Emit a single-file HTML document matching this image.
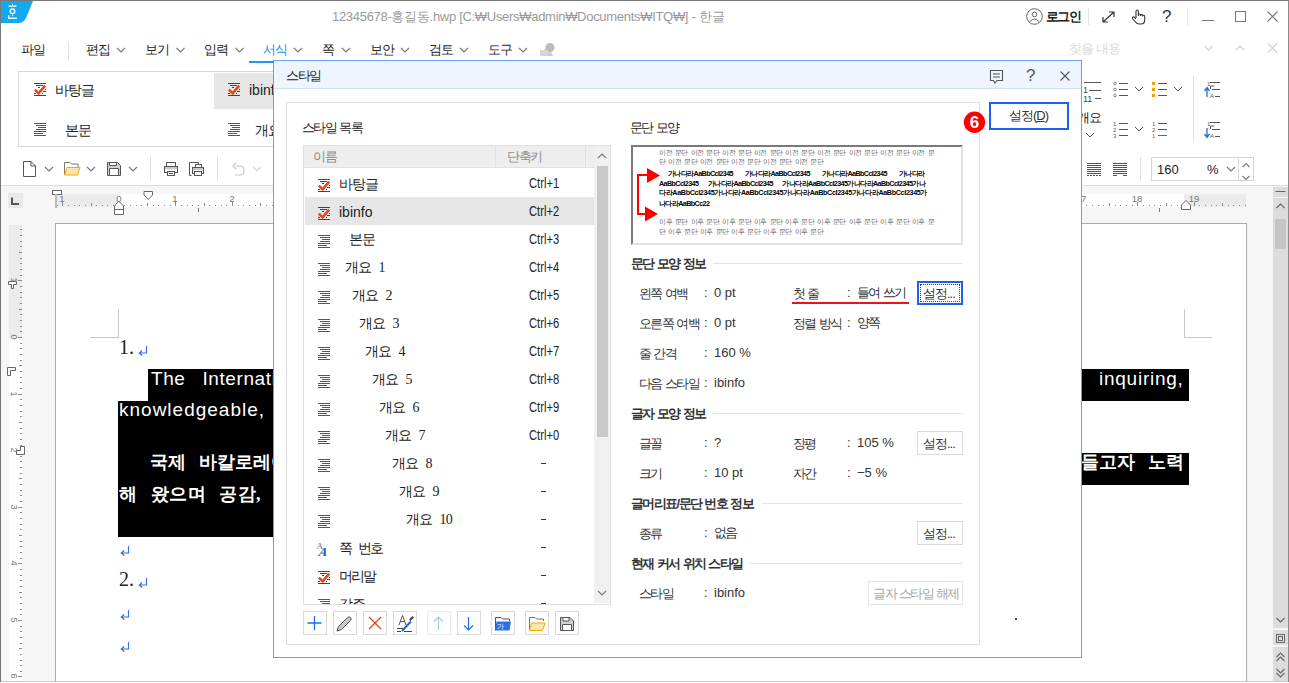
<!DOCTYPE html>
<html><head><meta charset="utf-8">
<style>
*{box-sizing:border-box}
html,body{margin:0;padding:0;width:1289px;height:683px;overflow:hidden;background:#fff;font-family:"Liberation Sans",sans-serif;color:#222}
.a{position:absolute}
.t{position:absolute;white-space:nowrap;line-height:1}
svg{position:absolute;overflow:visible}
</style></head><body>
<!-- window frame -->
<div class="a" style="left:0;top:0;width:1289px;height:683px;border-left:1px solid #777;border-top:1px solid #777;border-right:1px solid #8a8a8a"></div>

<!-- logo -->
<svg style="left:0;top:0" width="40" height="30"><path d="M1 1 H33 L26.5 17 Q24 23 18 23 H1 Z" fill="#12a9f3"/>
<g fill="#fff"><rect x="8.5" y="5.5" width="8" height="1.3"/><rect x="12" y="4" width="1" height="1.6"/><rect x="12" y="14.5" width="1" height="1.6"/><rect x="8" y="15.2" width="1.4" height="3.6"/><rect x="8" y="17.6" width="9" height="1.3"/></g>
<circle cx="12.5" cy="11.3" r="2.3" fill="none" stroke="#fff" stroke-width="1.3"/></svg>
<!-- title -->
<div class="t" style="left:332px;top:10px;font-size:13px;color:#9a9a9a;letter-spacing:-0.3px">12345678-홍길동.hwp [C:₩Users₩admin₩Documents₩ITQ₩] - 한글</div>

<!-- solution scaffold -->

<!-- title right -->
<svg style="left:1026px;top:8px" width="17" height="17"><circle cx="8.5" cy="8.5" r="7.8" fill="none" stroke="#666" stroke-width="1"/><circle cx="8.5" cy="6.5" r="2.3" fill="none" stroke="#666" stroke-width="1"/><path d="M4 13.5 Q8.5 8.5 13 13.5" fill="none" stroke="#666" stroke-width="1"/></svg>
<div class="t" style="left:1046px;top:10px;font-size:13px;font-weight:bold;color:#222;letter-spacing:-1.6px;word-spacing:1px">로그인</div>
<div class="a" style="left:1088px;top:8px;width:1px;height:17px;background:#e2e2e2"></div>
<svg style="left:1102px;top:11px" width="13" height="12"><path d="M1 11 L12 1 M7 1 H12 V6 M1 6 V11 H6" fill="none" stroke="#333" stroke-width="1.2"/></svg>
<svg style="left:1131px;top:9px" width="15" height="16"><path d="M5 9 V2.5 Q5 1 6.2 1 Q7.4 1 7.4 2.5 V7 M7.4 6 Q7.4 5 8.5 5 Q9.6 5 9.6 6 V7 M9.6 6.5 Q9.6 5.6 10.6 5.6 Q11.7 5.6 11.7 6.6 V7.4 M11.7 7 Q11.7 6.3 12.7 6.3 Q13.7 6.3 13.7 7.4 V11 Q13.7 15 10 15 H8 Q6 15 4.5 13 L1.5 9.5 Q1 8.5 2 8 Q3 7.6 3.8 8.6 L5 10" fill="none" stroke="#333" stroke-width="1.1"/></svg>
<div class="t" style="left:1162px;top:8px;font-size:17px;color:#333">?</div>
<div class="a" style="left:1187px;top:8px;width:1px;height:17px;background:#e2e2e2"></div>
<div class="a" style="left:1202px;top:20px;width:12px;height:1px;background:#777"></div>
<div class="a" style="left:1235px;top:11px;width:11px;height:11px;border:1px solid #777"></div>
<svg style="left:1267px;top:11px" width="11" height="11"><path d="M0.5 0.5 L10.5 10.5 M10.5 0.5 L0.5 10.5" stroke="#777" stroke-width="1.1"/></svg>

<!-- menu -->
<div class="t" style="left:21px;top:43px;font-size:13px;color:#222;letter-spacing:-1.5px">파일</div>
<div class="a" style="left:68px;top:42px;width:1px;height:18px;background:#e0e0e0"></div>
<div class="t" style="left:86px;top:43px;font-size:13px;color:#222;letter-spacing:-1.5px">편집</div>
<div class="t" style="left:145px;top:43px;font-size:13px;color:#222;letter-spacing:-1.5px">보기</div>
<div class="t" style="left:204px;top:43px;font-size:13px;color:#222;letter-spacing:-1.5px">입력</div>
<div class="t" style="left:263px;top:43px;font-size:13px;color:#1a8cf0;letter-spacing:-1.5px">서식</div>
<div class="t" style="left:322px;top:43px;font-size:13px;color:#222">쪽</div>
<div class="t" style="left:370px;top:43px;font-size:13px;color:#222;letter-spacing:-1.5px">보안</div>
<div class="t" style="left:429px;top:43px;font-size:13px;color:#222;letter-spacing:-1.5px">검토</div>
<div class="t" style="left:488px;top:43px;font-size:13px;color:#222;letter-spacing:-1.5px">도구</div>
<svg style="left:0;top:0" width="600" height="70">
<path d="M117 48 L121 52 L125 48 M176.5 48 L180.5 52 L184.5 48 M235.5 48 L239.5 52 L243.5 48 M294 48 L298 52 L302 48 M342 48 L346 52 L350 48 M401 48 L405 52 L409 48 M460 48 L464 52 L468 48 M519 48 L523 52 L527 48" fill="none" stroke="#777" stroke-width="1.1"/>
<path d="M541 56 L547 45 L553 56 Z" fill="#ccc"/><circle cx="550" cy="47.5" r="4.5" fill="#bbb"/><path d="M540 50 H548 V56 H540Z" fill="#d5d5d5"/>
</svg>
<div class="a" style="left:249px;top:61px;width:70px;height:2px;background:#1a9af0"></div>
<div class="t" style="left:1069px;top:42px;font-size:13px;color:#dadada;letter-spacing:-1.5px;word-spacing:2px">찾을 내용</div>
<svg style="left:1200px;top:40px" width="85" height="20"><path d="M4.5 6 L8.5 10 L12.5 6 M36 10 L40 6 L44 10" fill="none" stroke="#cfcfcf" stroke-width="1.1"/><path d="M68 3.5 L77 12.5 M77 3.5 L68 12.5" stroke="#cfcfcf" stroke-width="1.1"/></svg>

<!-- ribbon style box -->
<div class="a" style="left:18px;top:71px;width:300px;height:76px;border:1px solid #d8d8d8;border-right:none"></div>
<div class="a" style="left:214px;top:73px;width:80px;height:36px;background:#e6e6e6"></div>
<div class="t" style="left:55px;top:83px;font-size:14px;color:#222;letter-spacing:-1px">바탕글</div>
<div class="t" style="left:249px;top:83px;font-size:14px;color:#222">ibinfo</div>
<div class="t" style="left:65px;top:123px;font-size:14px;color:#222;letter-spacing:-1px">본문</div>
<div class="t" style="left:255px;top:123px;font-size:14px;color:#222;letter-spacing:-1px">개요 1</div>
<svg style="left:34px;top:83px" width="13" height="13"><g fill="#444"><rect x="0" y="0" width="12" height="1"/><rect x="2" y="2" width="7" height="1"/><rect x="4" y="4" width="2" height="1"/><rect x="11" y="6" width="1" height="1"/><rect x="9" y="8" width="3" height="1"/><rect x="0" y="10" width="2" height="1"/><rect x="8" y="10" width="1" height="1"/><rect x="0" y="12" width="12" height="1"/></g><path d="M0.9 6.6 L4.6 10.3 L11.2 2.6" fill="none" stroke="#e5481c" stroke-width="2.6"/></svg>
<svg style="left:228px;top:83px" width="13" height="13"><g fill="#444"><rect x="0" y="0" width="12" height="1"/><rect x="2" y="2" width="7" height="1"/><rect x="4" y="4" width="2" height="1"/><rect x="11" y="6" width="1" height="1"/><rect x="9" y="8" width="3" height="1"/><rect x="0" y="10" width="2" height="1"/><rect x="8" y="10" width="1" height="1"/><rect x="0" y="12" width="12" height="1"/></g><path d="M0.9 6.6 L4.6 10.3 L11.2 2.6" fill="none" stroke="#e5481c" stroke-width="2.6"/></svg>
<svg style="left:34px;top:123px" width="13" height="13"><g fill="#555"><rect x="0" y="0" width="12" height="1"/><rect x="2" y="2" width="10" height="1"/><rect x="4" y="4" width="8" height="1"/><rect x="2" y="6" width="10" height="1"/><rect x="0" y="8" width="12" height="1"/><rect x="0" y="10" width="9" height="1"/><rect x="0" y="12" width="12" height="1"/></g></svg>
<svg style="left:228px;top:123px" width="13" height="13"><g fill="#555"><rect x="0" y="0" width="12" height="1"/><rect x="2" y="2" width="10" height="1"/><rect x="4" y="4" width="8" height="1"/><rect x="2" y="6" width="10" height="1"/><rect x="0" y="8" width="12" height="1"/><rect x="0" y="10" width="9" height="1"/><rect x="0" y="12" width="12" height="1"/></g></svg>

<!-- toolbar -->
<svg style="left:0;top:150px" width="300" height="36">
<path d="M23.5 11.5 H31 L35.5 16 V26.5 H23.5 Z M31 11.5 V16 H35.5" fill="none" stroke="#555" stroke-width="1"/>
<path d="M45 17 L49 21 L53 17 M87 17 L91 21 L95 17 M129 17 L133 21 L137 17" fill="none" stroke="#777" stroke-width="1.1"/>
<path d="M64.5 24.5 V12.5 H70 L71.5 14 H78 V17" fill="none" stroke="#777" stroke-width="1"/>
<path d="M64.5 25 L67 17.5 H80 L77.5 25 Z" fill="#fde3b0" stroke="#efac00" stroke-width="1"/>
<path d="M107.5 12.5 H117.5 L120.5 15.5 V25.5 H107.5 Z" fill="#d0d0d0" stroke="#555" stroke-width="1"/>
<path d="M109.5 12.5 H116.5 V15.5 H109.5 Z" fill="#fff" stroke="#555" stroke-width="1"/>
<path d="M109.5 18.5 H118.5 V25.5 H109.5 Z" fill="#fff" stroke="#555" stroke-width="1"/>
<rect x="164.5" y="16.5" width="13" height="6" fill="#fff" stroke="#555"/><rect x="165" y="17" width="12" height="2.5" fill="#c9c9c9"/>
<rect x="166.5" y="12.5" width="9" height="4" fill="#fff" stroke="#555"/>
<rect x="167.5" y="21.5" width="7" height="4" fill="#fff" stroke="#555"/><path d="M169 23.5 H173" stroke="#555"/>
<path d="M191.5 25.5 H189.5 V12.5 H198.5 V14" fill="none" stroke="#555"/>
<rect x="192.5" y="17.5" width="11" height="6" fill="#fff" stroke="#555"/><rect x="193" y="18" width="10" height="2" fill="#c9c9c9"/>
<rect x="195.5" y="14.5" width="6" height="3" fill="#fff" stroke="#555"/>
<rect x="194.5" y="21.5" width="7" height="4" fill="#fff" stroke="#555"/>
<path d="M236 16 H240 Q244 16 244 20.5 Q244 25 240 25 H235 M236 13 L233 16 L236 19" fill="none" stroke="#c6c6c6" stroke-width="1.1"/>
<path d="M253 17 L257 21 L261 17" fill="none" stroke="#d0d0d0" stroke-width="1.1"/>
</svg>
<div class="a" style="left:150px;top:157px;width:1px;height:24px;background:#dedede"></div>
<div class="a" style="left:217px;top:157px;width:1px;height:24px;background:#dedede"></div>


<!-- lower bg -->
<div class="a" style="left:1px;top:185px;width:1287px;height:1px;background:#dcdcdc"></div>
<div class="a" style="left:1px;top:186px;width:1287px;height:495px;background:#f6f6f6"></div>



<!-- ruler -->
<div class="a" style="left:8px;top:193px;width:15px;height:15px;background:#e9e9e9"></div>
<svg style="left:8px;top:193px" width="15" height="15"><path d="M4 4.5 V11 H11" fill="none" stroke="#555" stroke-width="2"/></svg>
<div class="a" style="left:55px;top:194px;width:63px;height:13px;background:#ebebeb"></div>
<div class="a" style="left:118px;top:194px;width:1066px;height:13px;background:#fff"></div>
<div class="a" style="left:1184px;top:194px;width:62px;height:13px;background:#ebebeb"></div>
<svg style="left:0;top:0" width="1289" height="230"><g fill="#8a8a8a"><rect x="57" y="205" width="1" height="1"/><rect x="62" y="202" width="1" height="4"/><rect x="68" y="205" width="1" height="1"/><rect x="74" y="205" width="1" height="1"/><rect x="79" y="205" width="1" height="1"/><rect x="85" y="205" width="1" height="1"/><rect x="91" y="203" width="1" height="3"/><rect x="96" y="205" width="1" height="1"/><rect x="102" y="205" width="1" height="1"/><rect x="107" y="205" width="1" height="1"/><rect x="113" y="205" width="1" height="1"/><rect x="119" y="202" width="1" height="4"/><rect x="124" y="205" width="1" height="1"/><rect x="130" y="205" width="1" height="1"/><rect x="136" y="205" width="1" height="1"/><rect x="141" y="205" width="1" height="1"/><rect x="147" y="203" width="1" height="3"/><rect x="153" y="205" width="1" height="1"/><rect x="158" y="205" width="1" height="1"/><rect x="164" y="205" width="1" height="1"/><rect x="170" y="205" width="1" height="1"/><rect x="175" y="202" width="1" height="4"/><rect x="181" y="205" width="1" height="1"/><rect x="187" y="205" width="1" height="1"/><rect x="192" y="205" width="1" height="1"/><rect x="198" y="205" width="1" height="1"/><rect x="204" y="203" width="1" height="3"/><rect x="209" y="205" width="1" height="1"/><rect x="215" y="205" width="1" height="1"/><rect x="221" y="205" width="1" height="1"/><rect x="226" y="205" width="1" height="1"/><rect x="232" y="202" width="1" height="4"/><rect x="238" y="205" width="1" height="1"/><rect x="243" y="205" width="1" height="1"/><rect x="249" y="205" width="1" height="1"/><rect x="255" y="205" width="1" height="1"/><rect x="260" y="203" width="1" height="3"/><rect x="266" y="205" width="1" height="1"/><rect x="272" y="205" width="1" height="1"/><rect x="277" y="205" width="1" height="1"/><rect x="283" y="205" width="1" height="1"/><rect x="289" y="202" width="1" height="4"/><rect x="294" y="205" width="1" height="1"/><rect x="300" y="205" width="1" height="1"/><rect x="306" y="205" width="1" height="1"/><rect x="311" y="205" width="1" height="1"/><rect x="317" y="203" width="1" height="3"/><rect x="322" y="205" width="1" height="1"/><rect x="328" y="205" width="1" height="1"/><rect x="334" y="205" width="1" height="1"/><rect x="339" y="205" width="1" height="1"/><rect x="345" y="202" width="1" height="4"/><rect x="351" y="205" width="1" height="1"/><rect x="356" y="205" width="1" height="1"/><rect x="362" y="205" width="1" height="1"/><rect x="368" y="205" width="1" height="1"/><rect x="373" y="203" width="1" height="3"/><rect x="379" y="205" width="1" height="1"/><rect x="385" y="205" width="1" height="1"/><rect x="390" y="205" width="1" height="1"/><rect x="396" y="205" width="1" height="1"/><rect x="402" y="202" width="1" height="4"/><rect x="407" y="205" width="1" height="1"/><rect x="413" y="205" width="1" height="1"/><rect x="419" y="205" width="1" height="1"/><rect x="424" y="205" width="1" height="1"/><rect x="430" y="203" width="1" height="3"/><rect x="436" y="205" width="1" height="1"/><rect x="441" y="205" width="1" height="1"/><rect x="447" y="205" width="1" height="1"/><rect x="453" y="205" width="1" height="1"/><rect x="458" y="202" width="1" height="4"/><rect x="464" y="205" width="1" height="1"/><rect x="470" y="205" width="1" height="1"/><rect x="475" y="205" width="1" height="1"/><rect x="481" y="205" width="1" height="1"/><rect x="487" y="203" width="1" height="3"/><rect x="492" y="205" width="1" height="1"/><rect x="498" y="205" width="1" height="1"/><rect x="504" y="205" width="1" height="1"/><rect x="509" y="205" width="1" height="1"/><rect x="515" y="202" width="1" height="4"/><rect x="521" y="205" width="1" height="1"/><rect x="526" y="205" width="1" height="1"/><rect x="532" y="205" width="1" height="1"/><rect x="537" y="205" width="1" height="1"/><rect x="543" y="203" width="1" height="3"/><rect x="549" y="205" width="1" height="1"/><rect x="554" y="205" width="1" height="1"/><rect x="560" y="205" width="1" height="1"/><rect x="566" y="205" width="1" height="1"/><rect x="571" y="202" width="1" height="4"/><rect x="577" y="205" width="1" height="1"/><rect x="583" y="205" width="1" height="1"/><rect x="588" y="205" width="1" height="1"/><rect x="594" y="205" width="1" height="1"/><rect x="600" y="203" width="1" height="3"/><rect x="605" y="205" width="1" height="1"/><rect x="611" y="205" width="1" height="1"/><rect x="617" y="205" width="1" height="1"/><rect x="622" y="205" width="1" height="1"/><rect x="628" y="202" width="1" height="4"/><rect x="634" y="205" width="1" height="1"/><rect x="639" y="205" width="1" height="1"/><rect x="645" y="205" width="1" height="1"/><rect x="651" y="205" width="1" height="1"/><rect x="656" y="203" width="1" height="3"/><rect x="662" y="205" width="1" height="1"/><rect x="668" y="205" width="1" height="1"/><rect x="673" y="205" width="1" height="1"/><rect x="679" y="205" width="1" height="1"/><rect x="685" y="202" width="1" height="4"/><rect x="690" y="205" width="1" height="1"/><rect x="696" y="205" width="1" height="1"/><rect x="702" y="205" width="1" height="1"/><rect x="707" y="205" width="1" height="1"/><rect x="713" y="203" width="1" height="3"/><rect x="719" y="205" width="1" height="1"/><rect x="724" y="205" width="1" height="1"/><rect x="730" y="205" width="1" height="1"/><rect x="736" y="205" width="1" height="1"/><rect x="741" y="202" width="1" height="4"/><rect x="747" y="205" width="1" height="1"/><rect x="752" y="205" width="1" height="1"/><rect x="758" y="205" width="1" height="1"/><rect x="764" y="205" width="1" height="1"/><rect x="769" y="203" width="1" height="3"/><rect x="775" y="205" width="1" height="1"/><rect x="781" y="205" width="1" height="1"/><rect x="786" y="205" width="1" height="1"/><rect x="792" y="205" width="1" height="1"/><rect x="798" y="202" width="1" height="4"/><rect x="803" y="205" width="1" height="1"/><rect x="809" y="205" width="1" height="1"/><rect x="815" y="205" width="1" height="1"/><rect x="820" y="205" width="1" height="1"/><rect x="826" y="203" width="1" height="3"/><rect x="832" y="205" width="1" height="1"/><rect x="837" y="205" width="1" height="1"/><rect x="843" y="205" width="1" height="1"/><rect x="849" y="205" width="1" height="1"/><rect x="854" y="202" width="1" height="4"/><rect x="860" y="205" width="1" height="1"/><rect x="866" y="205" width="1" height="1"/><rect x="871" y="205" width="1" height="1"/><rect x="877" y="205" width="1" height="1"/><rect x="883" y="203" width="1" height="3"/><rect x="888" y="205" width="1" height="1"/><rect x="894" y="205" width="1" height="1"/><rect x="900" y="205" width="1" height="1"/><rect x="905" y="205" width="1" height="1"/><rect x="911" y="202" width="1" height="4"/><rect x="917" y="205" width="1" height="1"/><rect x="922" y="205" width="1" height="1"/><rect x="928" y="205" width="1" height="1"/><rect x="934" y="205" width="1" height="1"/><rect x="939" y="203" width="1" height="3"/><rect x="945" y="205" width="1" height="1"/><rect x="951" y="205" width="1" height="1"/><rect x="956" y="205" width="1" height="1"/><rect x="962" y="205" width="1" height="1"/><rect x="968" y="202" width="1" height="4"/><rect x="973" y="205" width="1" height="1"/><rect x="979" y="205" width="1" height="1"/><rect x="984" y="205" width="1" height="1"/><rect x="990" y="205" width="1" height="1"/><rect x="996" y="203" width="1" height="3"/><rect x="1001" y="205" width="1" height="1"/><rect x="1007" y="205" width="1" height="1"/><rect x="1013" y="205" width="1" height="1"/><rect x="1018" y="205" width="1" height="1"/><rect x="1024" y="202" width="1" height="4"/><rect x="1030" y="205" width="1" height="1"/><rect x="1035" y="205" width="1" height="1"/><rect x="1041" y="205" width="1" height="1"/><rect x="1047" y="205" width="1" height="1"/><rect x="1052" y="203" width="1" height="3"/><rect x="1058" y="205" width="1" height="1"/><rect x="1064" y="205" width="1" height="1"/><rect x="1069" y="205" width="1" height="1"/><rect x="1075" y="205" width="1" height="1"/><rect x="1081" y="202" width="1" height="4"/><rect x="1086" y="205" width="1" height="1"/><rect x="1092" y="205" width="1" height="1"/><rect x="1098" y="205" width="1" height="1"/><rect x="1103" y="205" width="1" height="1"/><rect x="1109" y="203" width="1" height="3"/><rect x="1115" y="205" width="1" height="1"/><rect x="1120" y="205" width="1" height="1"/><rect x="1126" y="205" width="1" height="1"/><rect x="1132" y="205" width="1" height="1"/><rect x="1137" y="202" width="1" height="4"/><rect x="1143" y="205" width="1" height="1"/><rect x="1149" y="205" width="1" height="1"/><rect x="1154" y="205" width="1" height="1"/><rect x="1160" y="205" width="1" height="1"/><rect x="1166" y="203" width="1" height="3"/><rect x="1171" y="205" width="1" height="1"/><rect x="1177" y="205" width="1" height="1"/><rect x="1183" y="205" width="1" height="1"/><rect x="1188" y="205" width="1" height="1"/><rect x="1194" y="202" width="1" height="4"/><rect x="1199" y="205" width="1" height="1"/><rect x="1205" y="205" width="1" height="1"/><rect x="1211" y="205" width="1" height="1"/><rect x="1216" y="205" width="1" height="1"/><rect x="1222" y="203" width="1" height="3"/><rect x="1228" y="205" width="1" height="1"/><rect x="1233" y="205" width="1" height="1"/><rect x="1239" y="205" width="1" height="1"/><rect x="1245" y="205" width="1" height="1"/></g><g font-family="Liberation Sans" font-size="9.5" fill="#777"><text x="62" y="202" text-anchor="middle">1</text><text x="119" y="202" text-anchor="middle">0</text><text x="175" y="202" text-anchor="middle">1</text><text x="232" y="202" text-anchor="middle">2</text><text x="289" y="202" text-anchor="middle">3</text><text x="345" y="202" text-anchor="middle">4</text><text x="402" y="202" text-anchor="middle">5</text><text x="458" y="202" text-anchor="middle">6</text><text x="515" y="202" text-anchor="middle">7</text><text x="571" y="202" text-anchor="middle">8</text><text x="628" y="202" text-anchor="middle">9</text><text x="685" y="202" text-anchor="middle">10</text><text x="741" y="202" text-anchor="middle">11</text><text x="798" y="202" text-anchor="middle">12</text><text x="854" y="202" text-anchor="middle">13</text><text x="911" y="202" text-anchor="middle">14</text><text x="968" y="202" text-anchor="middle">15</text><text x="1024" y="202" text-anchor="middle">16</text><text x="1081" y="202" text-anchor="middle">17</text><text x="1137" y="202" text-anchor="middle">18</text><text x="1194" y="202" text-anchor="middle">19</text></g><g fill="#fff" stroke="#666" stroke-width="1">
<rect x="52.5" y="190.5" width="9" height="4"/>
<path d="M114.5 214.5 V206 L118.8 201 L123.5 206 V214.5 Z M114.5 209.5 H123.5"/>
<path d="M144 191.5 H152.5 V195 L148.2 199.5 L144 195 Z"/>
<path d="M1181.5 209.5 V205 L1186 200.5 L1190.5 205 V209.5 Z"/>
</g><rect x="55" y="194" width="2" height="14" fill="#bbb"/>
<rect x="198" y="208" width="1" height="4" fill="#777"/><rect x="1159" y="208" width="1" height="4" fill="#777"/>
</svg>
<!-- vertical ruler -->
<div class="a" style="left:9px;top:225px;width:13px;height:113px;background:#ebebeb"></div>
<div class="a" style="left:9px;top:338px;width:13px;height:343px;background:#fff"></div>
<svg style="left:0;top:0" width="30" height="683"><g fill="#8a8a8a"><rect x="20" y="229" width="2" height="1"/><rect x="20" y="235" width="2" height="1"/><rect x="20" y="241" width="2" height="1"/><rect x="20" y="246" width="2" height="1"/><rect x="19" y="252" width="3" height="1"/><rect x="20" y="258" width="2" height="1"/><rect x="20" y="263" width="2" height="1"/><rect x="20" y="269" width="2" height="1"/><rect x="20" y="275" width="2" height="1"/><rect x="18" y="280" width="4" height="1"/><rect x="20" y="286" width="2" height="1"/><rect x="20" y="292" width="2" height="1"/><rect x="20" y="297" width="2" height="1"/><rect x="20" y="303" width="2" height="1"/><rect x="19" y="309" width="3" height="1"/><rect x="20" y="314" width="2" height="1"/><rect x="20" y="320" width="2" height="1"/><rect x="20" y="326" width="2" height="1"/><rect x="20" y="331" width="2" height="1"/><rect x="18" y="337" width="4" height="1"/><rect x="20" y="343" width="2" height="1"/><rect x="20" y="348" width="2" height="1"/><rect x="20" y="354" width="2" height="1"/><rect x="20" y="360" width="2" height="1"/><rect x="19" y="365" width="3" height="1"/><rect x="20" y="371" width="2" height="1"/><rect x="20" y="377" width="2" height="1"/><rect x="20" y="382" width="2" height="1"/><rect x="20" y="388" width="2" height="1"/><rect x="18" y="394" width="4" height="1"/><rect x="20" y="399" width="2" height="1"/><rect x="20" y="405" width="2" height="1"/><rect x="20" y="411" width="2" height="1"/><rect x="20" y="416" width="2" height="1"/><rect x="19" y="422" width="3" height="1"/><rect x="20" y="428" width="2" height="1"/><rect x="20" y="433" width="2" height="1"/><rect x="20" y="439" width="2" height="1"/><rect x="20" y="445" width="2" height="1"/><rect x="18" y="450" width="4" height="1"/><rect x="20" y="456" width="2" height="1"/><rect x="20" y="461" width="2" height="1"/><rect x="20" y="467" width="2" height="1"/><rect x="20" y="473" width="2" height="1"/><rect x="19" y="478" width="3" height="1"/><rect x="20" y="484" width="2" height="1"/><rect x="20" y="490" width="2" height="1"/><rect x="20" y="495" width="2" height="1"/><rect x="20" y="501" width="2" height="1"/><rect x="18" y="507" width="4" height="1"/><rect x="20" y="512" width="2" height="1"/><rect x="20" y="518" width="2" height="1"/><rect x="20" y="524" width="2" height="1"/><rect x="20" y="529" width="2" height="1"/><rect x="19" y="535" width="3" height="1"/><rect x="20" y="541" width="2" height="1"/><rect x="20" y="546" width="2" height="1"/><rect x="20" y="552" width="2" height="1"/><rect x="20" y="558" width="2" height="1"/><rect x="18" y="563" width="4" height="1"/><rect x="20" y="569" width="2" height="1"/><rect x="20" y="575" width="2" height="1"/><rect x="20" y="580" width="2" height="1"/><rect x="20" y="586" width="2" height="1"/><rect x="19" y="592" width="3" height="1"/><rect x="20" y="597" width="2" height="1"/><rect x="20" y="603" width="2" height="1"/><rect x="20" y="609" width="2" height="1"/><rect x="20" y="614" width="2" height="1"/><rect x="18" y="620" width="4" height="1"/><rect x="20" y="626" width="2" height="1"/><rect x="20" y="631" width="2" height="1"/><rect x="20" y="637" width="2" height="1"/><rect x="20" y="643" width="2" height="1"/><rect x="19" y="648" width="3" height="1"/><rect x="20" y="654" width="2" height="1"/><rect x="20" y="660" width="2" height="1"/><rect x="20" y="665" width="2" height="1"/><rect x="20" y="671" width="2" height="1"/><rect x="18" y="676" width="4" height="1"/></g><g font-family="Liberation Sans" font-size="9" fill="#777"><text x="0" y="0" transform="translate(10.5 280) rotate(90)" text-anchor="middle">1</text><text x="0" y="0" transform="translate(10.5 337) rotate(90)" text-anchor="middle">0</text><text x="0" y="0" transform="translate(10.5 394) rotate(90)" text-anchor="middle">1</text><text x="0" y="0" transform="translate(10.5 450) rotate(90)" text-anchor="middle">2</text><text x="0" y="0" transform="translate(10.5 507) rotate(90)" text-anchor="middle">3</text><text x="0" y="0" transform="translate(10.5 563) rotate(90)" text-anchor="middle">4</text><text x="0" y="0" transform="translate(10.5 620) rotate(90)" text-anchor="middle">5</text><text x="0" y="0" transform="translate(10.5 676) rotate(90)" text-anchor="middle">6</text></g><g fill="#fff" stroke="#666" stroke-width="1">
<path d="M8.5 281.5 H16.5 V284.5 H13.5 V288.5 H11.5 V284.5 H8.5 Z"/>
<path d="M7.5 375.5 V367.5 H15.5 V370.5 H10.5 V375.5 Z"/>
<path d="M16.5 454.5 V450.5 H20.5 V446.5 H24.5 V454.5 Z"/>
</g></svg>

<!-- scrollbar -->
<div class="a" style="left:1273px;top:187px;width:15px;height:494px;background:#dcdcdc"></div>
<div class="a" style="left:1273px;top:197px;width:15px;height:1px;background:#f5f5f5"></div>
<div class="a" style="left:1275px;top:219px;width:11px;height:30px;background:#c6c6c6"></div>
<div class="a" style="left:1273px;top:628px;width:15px;height:2px;background:#f5f5f5"></div>
<div class="a" style="left:1273px;top:645px;width:15px;height:2px;background:#f5f5f5"></div>
<svg style="left:1273px;top:187px" width="15" height="494">
<path d="M2.5 4.5 H12.5" stroke="#666" stroke-width="1"/>
<path d="M3.5 21 L7.5 17 L11.5 21" fill="none" stroke="#666" stroke-width="1.1"/>
<path d="M3.5 431 L7.5 435 L11.5 431" fill="none" stroke="#666" stroke-width="1.1"/>
<rect x="3.5" y="447.5" width="8" height="8" fill="none" stroke="#666" stroke-width="1"/><rect x="5.5" y="449.5" width="4" height="4" fill="none" stroke="#666" stroke-width="1"/>
<path d="M3.5 470 L7.5 466 L11.5 470 M3.5 474 L7.5 470 L11.5 474 M3.5 482 L7.5 486 L11.5 482 M3.5 486 L7.5 490 L11.5 486" fill="none" stroke="#666" stroke-width="1.1"/>
</svg>

<!-- right ribbon icons -->
<svg style="left:1075px;top:60px" width="214" height="130">
<g stroke="#555" stroke-width="1" fill="none">
<path d="M9 22.5 H26 M14 30.5 H26 M20 38.5 H26"/>
<path d="M44 23.5 H53 M44 29.5 H53 M44 35.5 H53"/>
<path d="M83 23.5 H92 M83 29.5 H92 M83 35.5 H92"/>
<path d="M44 63.5 H53 M44 69.5 H53 M44 75.5 H53"/>
<path d="M83 63.5 H92 M83 69.5 H92"/>
<path d="M135 22.5 H145 M137 29.5 H145 M140 36.5 H145"/>
<path d="M135 62.5 H145 M137 69.5 H145 M140 76.5 H145"/>
<path d="M135.5 29 V26 H139 M135.5 69 V66 H139"/>
<path d="M60 27 L64 31 L68 27 M99 27 L103 31 L107 27 M60 67 L64 71 L68 67 M11 73 L15 77 L19 73"/>
</g>
<g fill="none" stroke="#777" stroke-width="0.9"><circle cx="40" cy="23.5" r="1.3"/><circle cx="40" cy="29.5" r="1.3"/><circle cx="40" cy="35.5" r="1.3"/></g>
<g fill="#f0a000"><rect x="77" y="22" width="3" height="3"/><rect x="77" y="28" width="3" height="3"/><rect x="77" y="34" width="3" height="3"/></g>
<path d="M83 75.5 H92" stroke="#e5381c" stroke-width="1"/>
<g font-family="Liberation Sans" font-size="6" fill="#555"><text x="38" y="66">1</text><text x="38" y="72">2</text><text x="38" y="78">3</text><text x="77" y="66">1</text><text x="77" y="72">2</text><text x="77" y="78" fill="#e5381c">1</text><text x="132" y="26">1</text><text x="132" y="66">1</text><text x="135" y="38">A</text><text x="135" y="78">A</text></g>
<g font-family="Liberation Sans" font-size="9" fill="#444"><text x="8" y="33">1</text><text x="8" y="42">11</text></g>
<path d="M132 37 V28 M129.5 31 L132 27.5 L134.5 31 M132 68 V77 M129.5 74 L132 77.5 L134.5 74" fill="none" stroke="#1f6fe5" stroke-width="1.3"/>
</svg>
<div class="t" style="left:1077px;top:111px;font-size:13px;color:#222;letter-spacing:-1.5px">개요</div>
<div class="a" style="left:1193px;top:76px;width:1px;height:66px;background:#e0e0e0"></div>
<svg style="left:1080px;top:155px" width="60" height="30">
<path d="M7 8.5 H21 M7 10.5 H21 M7 12.5 H21 M7 14.5 H21 M7 16.5 H21 M7 18.5 H21" stroke="#555" stroke-width="1"/>
<path d="M7 20.5 H21" stroke="#555" stroke-width="1" stroke-dasharray="2 1"/>
<path d="M33 8.5 H47 M33 10.5 H47 M33 12.5 H47 M33 14.5 H47 M33 16.5 H47 M33 18.5 H47" stroke="#555" stroke-width="1"/>
<path d="M33 20.5 H37 M43 20.5 H47" stroke="#555" stroke-width="1"/>
</svg>
<div class="a" style="left:1140px;top:157px;width:1px;height:24px;background:#e0e0e0"></div>
<div class="a" style="left:1151px;top:157px;width:103px;height:24px;border:1px solid #d6d6d6;background:#fff"></div>
<div class="a" style="left:1238px;top:158px;width:1px;height:22px;background:#d6d6d6"></div>
<div class="t" style="left:1157px;top:163px;font-size:13px;color:#222">160</div>
<div class="t" style="left:1207px;top:163px;font-size:13px;color:#222">%</div>
<svg style="left:1220px;top:155px" width="40" height="30"><path d="M7 12 L11 16 L15 12 M22.5 12 L26 8.5 L29.5 12 M22.5 21 L26 24.5 L29.5 21" fill="none" stroke="#777" stroke-width="1.1"/></svg>

<!-- page -->
<div class="a" style="left:55px;top:223px;width:1192px;height:460px;background:#fff;border:1px solid #a9a9a9;border-bottom:none"></div>


<!-- doc content -->
<div class="a" style="left:118px;top:309px;width:1px;height:29px;background:#c8c8c8"></div>
<div class="a" style="left:90px;top:337px;width:28px;height:1px;background:#c8c8c8"></div>
<div class="a" style="left:1184px;top:309px;width:1px;height:29px;background:#c8c8c8"></div>
<div class="a" style="left:1184px;top:337px;width:28px;height:1px;background:#c8c8c8"></div>
<div class="t" style="left:119px;top:337px;font-size:20px;font-family:'Liberation Serif',serif;color:#222">1.</div>
<div class="t" style="left:119px;top:569px;font-size:20px;font-family:'Liberation Serif',serif;color:#222">2.</div>
<svg style="left:138px;top:346px" width="10" height="10"><path d="M8.5 0 V7 H2 M4.2 4.5 L1.3 7 L4.2 9.5" fill="none" stroke="#3b6fe8" stroke-width="1.2"/></svg>
<svg style="left:120px;top:546px" width="10" height="10"><path d="M8.5 0 V7 H2 M4.2 4.5 L1.3 7 L4.2 9.5" fill="none" stroke="#3b6fe8" stroke-width="1.2"/></svg>
<svg style="left:138px;top:578px" width="10" height="10"><path d="M8.5 0 V7 H2 M4.2 4.5 L1.3 7 L4.2 9.5" fill="none" stroke="#3b6fe8" stroke-width="1.2"/></svg>
<svg style="left:120px;top:610px" width="10" height="10"><path d="M8.5 0 V7 H2 M4.2 4.5 L1.3 7 L4.2 9.5" fill="none" stroke="#3b6fe8" stroke-width="1.2"/></svg>
<svg style="left:120px;top:642px" width="10" height="10"><path d="M8.5 0 V7 H2 M4.2 4.5 L1.3 7 L4.2 9.5" fill="none" stroke="#3b6fe8" stroke-width="1.2"/></svg>

<div class="a" style="left:148px;top:369px;width:1041px;height:32px;background:#000"></div>
<div class="a" style="left:118px;top:401px;width:900px;height:52px;background:#000"></div>
<div class="a" style="left:118px;top:453px;width:1071px;height:32px;background:#000"></div>
<div class="a" style="left:118px;top:485px;width:900px;height:52px;background:#000"></div>
<div class="t" style="left:151px;top:369px;font-size:19px;color:#fff;letter-spacing:0.6px;word-spacing:11px">The International</div>
<div class="t" style="left:1099px;top:369px;font-size:19px;color:#fff;letter-spacing:0.75px">inquiring,</div>
<div class="t" style="left:119px;top:400px;font-size:19px;color:#fff;letter-spacing:1px">knowledgeable,</div>
<div class="t" style="left:150px;top:453px;font-size:18px;font-family:'Liberation Serif',serif;font-weight:bold;color:#fff;word-spacing:8px">국제 바칼로레아</div>
<div class="t" style="left:1063px;top:453px;font-size:18px;font-family:'Liberation Serif',serif;font-weight:bold;color:#fff;word-spacing:8px">만들고자 노력</div>
<div class="t" style="left:119px;top:485px;font-size:18px;font-family:'Liberation Serif',serif;font-weight:bold;color:#fff;word-spacing:8px;letter-spacing:0.5px">해 왔으며 공감,</div>

<!-- dialog -->
<div class="a" style="left:273px;top:60px;width:809px;height:598px;background:#fff;border:1px solid #6d9cf5"></div>
<div class="a" style="left:274px;top:61px;width:807px;height:28px;background:#eef5fe;border-bottom:1px solid #cfdff6"></div>
<div class="t" style="left:286px;top:69px;font-size:13px;color:#222;letter-spacing:-1.5px">스타일</div>
<div class="a" style="left:286px;top:102px;width:694px;height:543px;border:1px solid #dedede"></div>

<div class="t" style="left:302px;top:121px;font-size:13px;color:#222;letter-spacing:-1.6px;word-spacing:1px">스타일 목록</div>
<div class="a" style="left:303px;top:145px;width:308px;height:460px;background:#fff;overflow:hidden">
<div class="a" style="left:0;top:0;width:308px;height:23px;background:#eeeeee;border-bottom:1px solid #e2e2e2"></div>
<div class="a" style="left:192px;top:0;width:1px;height:22px;background:#e0e0e0"></div>
<div class="a" style="left:282px;top:0;width:1px;height:22px;background:#e0e0e0"></div>
<div class="t" style="left:10px;top:5px;font-size:13px;color:#8a8a8a;letter-spacing:-1px">이름</div>
<div class="t" style="left:204px;top:5px;font-size:13px;color:#8a8a8a;letter-spacing:-1.5px">단축키</div>
<div class="a" style="left:2px;top:52px;width:289px;height:28px;background:#e6e6e6"></div>
<svg style="left:15px;top:34px" width="13" height="13"><g fill="#444"><rect x="0" y="0" width="12" height="1"/><rect x="2" y="2" width="7" height="1"/><rect x="4" y="4" width="2" height="1"/><rect x="11" y="6" width="1" height="1"/><rect x="9" y="8" width="3" height="1"/><rect x="0" y="10" width="2" height="1"/><rect x="8" y="10" width="1" height="1"/><rect x="0" y="12" width="12" height="1"/></g><path d="M0.9 6.6 L4.6 10.3 L11.2 2.6" fill="none" stroke="#e5481c" stroke-width="2.6"/></svg>
<div class="t" style="left:36px;top:32px;font-size:14px;color:#222;letter-spacing:-1px">바탕글</div>
<div class="t" style="left:226px;top:31px;font-size:14px;color:#222;transform:scaleX(0.8);transform-origin:0 0">Ctrl+1</div>
<svg style="left:15px;top:62px" width="13" height="13"><g fill="#444"><rect x="0" y="0" width="12" height="1"/><rect x="2" y="2" width="7" height="1"/><rect x="4" y="4" width="2" height="1"/><rect x="11" y="6" width="1" height="1"/><rect x="9" y="8" width="3" height="1"/><rect x="0" y="10" width="2" height="1"/><rect x="8" y="10" width="1" height="1"/><rect x="0" y="12" width="12" height="1"/></g><path d="M0.9 6.6 L4.6 10.3 L11.2 2.6" fill="none" stroke="#e5481c" stroke-width="2.6"/></svg>
<div class="t" style="left:36px;top:60px;font-size:14px;color:#222;letter-spacing:0px">ibinfo</div>
<div class="t" style="left:226px;top:59px;font-size:14px;color:#222;transform:scaleX(0.8);transform-origin:0 0">Ctrl+2</div>
<svg style="left:15px;top:90px" width="13" height="13"><g fill="#555"><rect x="0" y="0" width="12" height="1"/><rect x="2" y="2" width="10" height="1"/><rect x="4" y="4" width="8" height="1"/><rect x="2" y="6" width="10" height="1"/><rect x="0" y="8" width="12" height="1"/><rect x="0" y="10" width="9" height="1"/><rect x="0" y="12" width="12" height="1"/></g></svg>
<div class="t" style="left:46px;top:88px;font-size:14px;font-family:'Liberation Serif',serif;color:#222;word-spacing:4px;letter-spacing:-0.7px">본문</div>
<div class="t" style="left:226px;top:87px;font-size:14px;color:#222;transform:scaleX(0.8);transform-origin:0 0">Ctrl+3</div>
<svg style="left:15px;top:118px" width="13" height="13"><g fill="#555"><rect x="0" y="0" width="12" height="1"/><rect x="2" y="2" width="10" height="1"/><rect x="4" y="4" width="8" height="1"/><rect x="2" y="6" width="10" height="1"/><rect x="0" y="8" width="12" height="1"/><rect x="0" y="10" width="9" height="1"/><rect x="0" y="12" width="12" height="1"/></g></svg>
<div class="t" style="left:42px;top:116px;font-size:14px;font-family:'Liberation Serif',serif;color:#222;word-spacing:4px;letter-spacing:-0.7px">개요 1</div>
<div class="t" style="left:226px;top:115px;font-size:14px;color:#222;transform:scaleX(0.8);transform-origin:0 0">Ctrl+4</div>
<svg style="left:15px;top:146px" width="13" height="13"><g fill="#555"><rect x="0" y="0" width="12" height="1"/><rect x="2" y="2" width="10" height="1"/><rect x="4" y="4" width="8" height="1"/><rect x="2" y="6" width="10" height="1"/><rect x="0" y="8" width="12" height="1"/><rect x="0" y="10" width="9" height="1"/><rect x="0" y="12" width="12" height="1"/></g></svg>
<div class="t" style="left:49px;top:144px;font-size:14px;font-family:'Liberation Serif',serif;color:#222;word-spacing:4px;letter-spacing:-0.7px">개요 2</div>
<div class="t" style="left:226px;top:143px;font-size:14px;color:#222;transform:scaleX(0.8);transform-origin:0 0">Ctrl+5</div>
<svg style="left:15px;top:174px" width="13" height="13"><g fill="#555"><rect x="0" y="0" width="12" height="1"/><rect x="2" y="2" width="10" height="1"/><rect x="4" y="4" width="8" height="1"/><rect x="2" y="6" width="10" height="1"/><rect x="0" y="8" width="12" height="1"/><rect x="0" y="10" width="9" height="1"/><rect x="0" y="12" width="12" height="1"/></g></svg>
<div class="t" style="left:56px;top:172px;font-size:14px;font-family:'Liberation Serif',serif;color:#222;word-spacing:4px;letter-spacing:-0.7px">개요 3</div>
<div class="t" style="left:226px;top:171px;font-size:14px;color:#222;transform:scaleX(0.8);transform-origin:0 0">Ctrl+6</div>
<svg style="left:15px;top:202px" width="13" height="13"><g fill="#555"><rect x="0" y="0" width="12" height="1"/><rect x="2" y="2" width="10" height="1"/><rect x="4" y="4" width="8" height="1"/><rect x="2" y="6" width="10" height="1"/><rect x="0" y="8" width="12" height="1"/><rect x="0" y="10" width="9" height="1"/><rect x="0" y="12" width="12" height="1"/></g></svg>
<div class="t" style="left:62px;top:200px;font-size:14px;font-family:'Liberation Serif',serif;color:#222;word-spacing:4px;letter-spacing:-0.7px">개요 4</div>
<div class="t" style="left:226px;top:199px;font-size:14px;color:#222;transform:scaleX(0.8);transform-origin:0 0">Ctrl+7</div>
<svg style="left:15px;top:230px" width="13" height="13"><g fill="#555"><rect x="0" y="0" width="12" height="1"/><rect x="2" y="2" width="10" height="1"/><rect x="4" y="4" width="8" height="1"/><rect x="2" y="6" width="10" height="1"/><rect x="0" y="8" width="12" height="1"/><rect x="0" y="10" width="9" height="1"/><rect x="0" y="12" width="12" height="1"/></g></svg>
<div class="t" style="left:69px;top:228px;font-size:14px;font-family:'Liberation Serif',serif;color:#222;word-spacing:4px;letter-spacing:-0.7px">개요 5</div>
<div class="t" style="left:226px;top:227px;font-size:14px;color:#222;transform:scaleX(0.8);transform-origin:0 0">Ctrl+8</div>
<svg style="left:15px;top:258px" width="13" height="13"><g fill="#555"><rect x="0" y="0" width="12" height="1"/><rect x="2" y="2" width="10" height="1"/><rect x="4" y="4" width="8" height="1"/><rect x="2" y="6" width="10" height="1"/><rect x="0" y="8" width="12" height="1"/><rect x="0" y="10" width="9" height="1"/><rect x="0" y="12" width="12" height="1"/></g></svg>
<div class="t" style="left:76px;top:256px;font-size:14px;font-family:'Liberation Serif',serif;color:#222;word-spacing:4px;letter-spacing:-0.7px">개요 6</div>
<div class="t" style="left:226px;top:255px;font-size:14px;color:#222;transform:scaleX(0.8);transform-origin:0 0">Ctrl+9</div>
<svg style="left:15px;top:286px" width="13" height="13"><g fill="#555"><rect x="0" y="0" width="12" height="1"/><rect x="2" y="2" width="10" height="1"/><rect x="4" y="4" width="8" height="1"/><rect x="2" y="6" width="10" height="1"/><rect x="0" y="8" width="12" height="1"/><rect x="0" y="10" width="9" height="1"/><rect x="0" y="12" width="12" height="1"/></g></svg>
<div class="t" style="left:82px;top:284px;font-size:14px;font-family:'Liberation Serif',serif;color:#222;word-spacing:4px;letter-spacing:-0.7px">개요 7</div>
<div class="t" style="left:226px;top:283px;font-size:14px;color:#222;transform:scaleX(0.8);transform-origin:0 0">Ctrl+0</div>
<svg style="left:15px;top:314px" width="13" height="13"><g fill="#555"><rect x="0" y="0" width="12" height="1"/><rect x="2" y="2" width="10" height="1"/><rect x="4" y="4" width="8" height="1"/><rect x="2" y="6" width="10" height="1"/><rect x="0" y="8" width="12" height="1"/><rect x="0" y="10" width="9" height="1"/><rect x="0" y="12" width="12" height="1"/></g></svg>
<div class="t" style="left:89px;top:312px;font-size:14px;font-family:'Liberation Serif',serif;color:#222;word-spacing:4px;letter-spacing:-0.7px">개요 8</div>
<div class="a" style="left:238px;top:318px;width:5px;height:1px;background:#333"></div>
<svg style="left:15px;top:342px" width="13" height="13"><g fill="#555"><rect x="0" y="0" width="12" height="1"/><rect x="2" y="2" width="10" height="1"/><rect x="4" y="4" width="8" height="1"/><rect x="2" y="6" width="10" height="1"/><rect x="0" y="8" width="12" height="1"/><rect x="0" y="10" width="9" height="1"/><rect x="0" y="12" width="12" height="1"/></g></svg>
<div class="t" style="left:96px;top:340px;font-size:14px;font-family:'Liberation Serif',serif;color:#222;word-spacing:4px;letter-spacing:-0.7px">개요 9</div>
<div class="a" style="left:238px;top:346px;width:5px;height:1px;background:#333"></div>
<svg style="left:15px;top:370px" width="13" height="13"><g fill="#555"><rect x="0" y="0" width="12" height="1"/><rect x="2" y="2" width="10" height="1"/><rect x="4" y="4" width="8" height="1"/><rect x="2" y="6" width="10" height="1"/><rect x="0" y="8" width="12" height="1"/><rect x="0" y="10" width="9" height="1"/><rect x="0" y="12" width="12" height="1"/></g></svg>
<div class="t" style="left:103px;top:368px;font-size:14px;font-family:'Liberation Serif',serif;color:#222;word-spacing:4px;letter-spacing:-0.7px">개요 10</div>
<div class="a" style="left:238px;top:374px;width:5px;height:1px;background:#333"></div>
<svg style="left:13px;top:396px" width="16" height="16"><text x="0.5" y="7.5" font-size="9" font-weight="bold" fill="#9a9a9a" font-family="Liberation Serif">A</text><text x="7" y="15" font-size="12" font-weight="bold" fill="#1c64c0" font-family="Liberation Serif" transform="skewX(-20)">A</text></svg>
<div class="t" style="left:36px;top:396px;font-size:14px;color:#222;letter-spacing:-1.5px;word-spacing:4px">쪽 번호</div>
<div class="a" style="left:238px;top:402px;width:5px;height:1px;background:#333"></div>
<svg style="left:15px;top:426px" width="13" height="13"><g fill="#444"><rect x="0" y="0" width="12" height="1"/><rect x="2" y="2" width="7" height="1"/><rect x="4" y="4" width="2" height="1"/><rect x="11" y="6" width="1" height="1"/><rect x="9" y="8" width="3" height="1"/><rect x="0" y="10" width="2" height="1"/><rect x="8" y="10" width="1" height="1"/><rect x="0" y="12" width="12" height="1"/></g><path d="M0.9 6.6 L4.6 10.3 L11.2 2.6" fill="none" stroke="#e5481c" stroke-width="2.6"/></svg>
<div class="t" style="left:36px;top:424px;font-size:14px;color:#222;letter-spacing:-1.8px">머리말</div>
<div class="a" style="left:238px;top:430px;width:5px;height:1px;background:#333"></div>
<svg style="left:15px;top:454px" width="13" height="13"><g fill="#555"><rect x="0" y="0" width="12" height="1"/><rect x="2" y="2" width="10" height="1"/><rect x="4" y="4" width="8" height="1"/><rect x="2" y="6" width="10" height="1"/><rect x="0" y="8" width="12" height="1"/><rect x="0" y="10" width="9" height="1"/><rect x="0" y="12" width="12" height="1"/></g></svg>
<div class="t" style="left:36px;top:452px;font-size:14px;color:#222;letter-spacing:-1px">각주</div>
<div class="a" style="left:238px;top:458px;width:5px;height:1px;background:#333"></div>
<div class="a" style="left:291px;top:0;width:16px;height:458px;background:#f0f0f0"></div>
<div class="a" style="left:294px;top:21px;width:11px;height:271px;background:#c8c8c8"></div>
<svg style="left:291px;top:0" width="16" height="458"><path d="M4 13 L8 9 L12 13 M4 446 L8 450 L12 446" fill="none" stroke="#777" stroke-width="1.1"/></svg>
<div class="a" style="left:0;top:0;width:308px;height:460px;border:1px solid #dedede"></div>
</div>
<div class="a" style="left:303px;top:611px;width:24px;height:24px;border:1px solid #d9d9d9"></div>
<div class="a" style="left:333px;top:611px;width:24px;height:24px;border:1px solid #d9d9d9"></div>
<div class="a" style="left:363px;top:611px;width:24px;height:24px;border:1px solid #d9d9d9"></div>
<div class="a" style="left:393px;top:611px;width:24px;height:24px;border:1px solid #d9d9d9"></div>
<div class="a" style="left:427px;top:611px;width:24px;height:24px;border:1px solid #ececec"></div>
<div class="a" style="left:457px;top:611px;width:24px;height:24px;border:1px solid #d9d9d9"></div>
<div class="a" style="left:491px;top:611px;width:24px;height:24px;border:1px solid #d9d9d9"></div>
<div class="a" style="left:525px;top:611px;width:24px;height:24px;border:1px solid #d9d9d9"></div>
<div class="a" style="left:555px;top:611px;width:24px;height:24px;border:1px solid #d9d9d9"></div>
<svg style="left:0;top:0" width="600" height="660">
<path d="M314.5 616 V630 M307.5 623 H321.5" stroke="#1f6fe5" stroke-width="1.3"/>
<path d="M337 631 L338.5 626.5 L347.5 617.5 Q349 616 350.5 617.5 Q352 619 350.5 620.5 L341.5 629.5 Z" fill="#c7c7c7" stroke="#555" stroke-width="1"/>
<path d="M369 617 L381 629 M381 617 L369 629" stroke="#e8391e" stroke-width="1.2"/>
<path d="M397 628.5 H403 M397 631.5 H401 M404 631.5 H412" stroke="#444" stroke-width="1"/>
<path d="M399 625 L402.5 615.5 L406 625 M400.3 621.5 H404.7" fill="none" stroke="#444" stroke-width="0.9"/>
<path d="M402 631 L408 624.5 L411 621.5" stroke="#2466e0" stroke-width="2.2"/><path d="M409 619.5 L412.5 616 L414 617.5 L410.5 621" fill="#444"/>
<path d="M438.5 630 V617 M434 621.5 L438.5 617 L443 621.5" fill="none" stroke="#a9c6f5" stroke-width="1.2"/>
<path d="M468.5 617 V630 M464 625.5 L468.5 630 L473 625.5" fill="none" stroke="#1f6fe5" stroke-width="1.2"/>
<path d="M495.5 630.5 V617.5 H501 L502.5 619 H509.5 V621" fill="none" stroke="#555" stroke-width="1"/>
<path d="M495 630.5 L496.5 621.5 H511 L509.5 630.5 Z" fill="#2f6ee8"/>
<text x="497" y="629" font-size="7" fill="#fff" font-family="Liberation Sans">가</text>
<path d="M529.5 630.5 V617.5 H535 L536.5 619 H543.5 V621" fill="none" stroke="#777" stroke-width="1"/>
<path d="M529.5 630.5 L531.5 623 H545 L542.5 630.5 Z" fill="#fde3b0" stroke="#efac00" stroke-width="1"/>
<path d="M560.5 617.5 H570 L573.5 621 V630.5 H560.5 Z" fill="#d0d0d0" stroke="#555" stroke-width="1"/>
<path d="M563 617.5 H569 V621 H563 Z" fill="#fff" stroke="#555" stroke-width="1"/>
<path d="M562.5 624.5 H571.5 V630.5 H562.5 Z" fill="#fff" stroke="#555" stroke-width="1"/>
</svg>
<div class="t" style="left:630px;top:121px;font-size:13px;color:#222;letter-spacing:-1.7px;word-spacing:1px">문단 모양</div>
<div class="a" style="left:631px;top:145px;width:332px;height:100px;background:#fff;border-top:2px solid #7a7a7a;border-left:2px solid #7a7a7a;border-right:2px solid #e3e3e3;border-bottom:2px solid #e3e3e3"></div>
<div class="a" style="left:633px;top:147px;width:328px;height:96px;overflow:hidden"><div class="t" style="left:26px;top:2px;font-size:7.2px;color:#5e5e5e;letter-spacing:-0.4px;word-spacing:1px">이전 문단 이전 문단 이전 문단 이전 문단 이전 문단 이전 문단 이전 문단 이전 문단 이전 문</div><div class="t" style="left:26px;top:11px;font-size:7.2px;color:#5e5e5e;letter-spacing:-0.4px;word-spacing:1px">단 이전 문단 이전 문단 이전 문단 이전 문단 이전 문단</div><div class="t" style="left:35px;top:23px;font-size:7.2px;font-weight:bold;color:#000;letter-spacing:-0.6px;word-spacing:1px">가나다라AaBbCcI2345 &nbsp; &nbsp; 가나다라AaBbCcI2345 &nbsp; &nbsp; 가나다라AaBbCcI2345 &nbsp; &nbsp; 가나다라</div><div class="t" style="left:26px;top:33px;font-size:7.2px;font-weight:bold;color:#000;letter-spacing:-0.6px;word-spacing:1px">AaBbCcI2345 &nbsp; &nbsp;가나다라AaBbCcI2345 &nbsp; &nbsp;가나다라AaBbCcI2345가나다라AaBbCcI2345가나</div><div class="t" style="left:26px;top:42px;font-size:7.2px;font-weight:bold;color:#000;letter-spacing:-0.35px;word-spacing:1px">다라AaBbCcI2345가나다라AaBbCcI2345가나다라AaBbCcI2345가나다라AaBbCcI2345가</div><div class="t" style="left:26px;top:53px;font-size:7.2px;font-weight:bold;color:#000;letter-spacing:-0.6px;word-spacing:1px">나다라AaBbCc22</div><div class="t" style="left:26px;top:71px;font-size:7.2px;color:#5e5e5e;letter-spacing:-0.4px;word-spacing:1px">이후 문단 이후 문단 이후 문단 이후 문단 이후 문단 이후 문단 이후 문단 이후 문단 이후 문</div><div class="t" style="left:26px;top:81px;font-size:7.2px;color:#5e5e5e;letter-spacing:-0.4px;word-spacing:1px">단 이후 문단 이후 문단 이후 문단 이후 문단 이후 문단</div></div><svg style="left:0;top:0" width="700" height="250"><path d="M649 175 H638 V214 H647" fill="none" stroke="#f00" stroke-width="2"/><path d="M647 168 L660 175.5 L647 183 Z M645 206.5 L658 214 L645 221.5 Z" fill="#f00"/></svg>
<div class="t" style="left:631px;top:257px;font-size:13px;font-weight:bold;color:#333;letter-spacing:-1.6px;word-spacing:1px">문단 모양 정보</div>
<div class="a" style="left:713px;top:263px;width:250px;height:1px;background:#e3e3e3"></div>
<div class="t" style="left:639px;top:287px;font-size:13px;color:#333;letter-spacing:-1.6px;word-spacing:1px">왼쪽 여백</div>
<div class="t" style="left:704px;top:286px;font-size:13px;color:#333">:</div>
<div class="t" style="left:714px;top:286px;font-size:13px;color:#333;letter-spacing:0px">0 pt</div>
<div class="t" style="left:793px;top:287px;font-size:13px;color:#333;letter-spacing:-1.6px;word-spacing:1px">첫 줄</div>
<div class="t" style="left:847px;top:286px;font-size:13px;color:#333">:</div>
<div class="t" style="left:857px;top:286px;font-size:13px;color:#333;letter-spacing:-1.6px;word-spacing:1px">들여 쓰기</div>
<div class="a" style="left:792px;top:302px;width:117px;height:2px;background:#e8141a"></div>
<div class="a" style="left:917px;top:281px;width:46px;height:24px;border:2px solid #1f5ff5;background:#fff"></div>
<div class="a" style="left:920px;top:284px;width:40px;height:18px;border:1px dotted #444"></div>
<div class="t" style="left:923px;top:287px;font-size:13px;color:#333;letter-spacing:-1px">설정...</div>
<div class="t" style="left:639px;top:317px;font-size:13px;color:#333;letter-spacing:-1.6px;word-spacing:1px">오른쪽 여백</div>
<div class="t" style="left:704px;top:316px;font-size:13px;color:#333">:</div>
<div class="t" style="left:714px;top:316px;font-size:13px;color:#333;letter-spacing:0px">0 pt</div>
<div class="t" style="left:793px;top:317px;font-size:13px;color:#333;letter-spacing:-1.6px;word-spacing:1px">정렬 방식</div>
<div class="t" style="left:847px;top:316px;font-size:13px;color:#333">:</div>
<div class="t" style="left:857px;top:316px;font-size:13px;color:#333;letter-spacing:-1.6px;word-spacing:1px">양쪽</div>
<div class="t" style="left:639px;top:347px;font-size:13px;color:#333;letter-spacing:-1.6px;word-spacing:1px">줄 간격</div>
<div class="t" style="left:704px;top:346px;font-size:13px;color:#333">:</div>
<div class="t" style="left:714px;top:346px;font-size:13px;color:#333;letter-spacing:0px">160 %</div>
<div class="t" style="left:639px;top:377px;font-size:13px;color:#333;letter-spacing:-1.6px;word-spacing:1px">다음 스타일</div>
<div class="t" style="left:704px;top:376px;font-size:13px;color:#333">:</div>
<div class="t" style="left:714px;top:376px;font-size:13px;color:#333;letter-spacing:0px">ibinfo</div>
<div class="t" style="left:631px;top:407px;font-size:13px;font-weight:bold;color:#333;letter-spacing:-1.6px;word-spacing:1px">글자 모양 정보</div>
<div class="a" style="left:713px;top:413px;width:250px;height:1px;background:#e3e3e3"></div>
<div class="t" style="left:639px;top:437px;font-size:13px;color:#333;letter-spacing:-1.6px;word-spacing:1px">글꼴</div>
<div class="t" style="left:704px;top:436px;font-size:13px;color:#333">:</div>
<div class="t" style="left:714px;top:436px;font-size:13px;color:#333;letter-spacing:0px">?</div>
<div class="t" style="left:793px;top:437px;font-size:13px;color:#333;letter-spacing:-1.6px;word-spacing:1px">장평</div>
<div class="t" style="left:847px;top:436px;font-size:13px;color:#333">:</div>
<div class="t" style="left:857px;top:436px;font-size:13px;color:#333;letter-spacing:0px">105 %</div>
<div class="a" style="left:917px;top:431px;width:46px;height:24px;border:1px solid #d9d9d9;background:#fff"></div>
<div class="t" style="left:923px;top:437px;font-size:13px;color:#333;letter-spacing:-1px">설정...</div>
<div class="t" style="left:639px;top:467px;font-size:13px;color:#333;letter-spacing:-1.6px;word-spacing:1px">크기</div>
<div class="t" style="left:704px;top:466px;font-size:13px;color:#333">:</div>
<div class="t" style="left:714px;top:466px;font-size:13px;color:#333;letter-spacing:0px">10 pt</div>
<div class="t" style="left:793px;top:467px;font-size:13px;color:#333;letter-spacing:-1.6px;word-spacing:1px">자간</div>
<div class="t" style="left:847px;top:466px;font-size:13px;color:#333">:</div>
<div class="t" style="left:857px;top:466px;font-size:13px;color:#333;letter-spacing:0px">−5 %</div>
<div class="t" style="left:631px;top:497px;font-size:13px;font-weight:bold;color:#333;letter-spacing:-1.6px;word-spacing:1px">글머리표/문단 번호 정보</div>
<div class="a" style="left:762px;top:503px;width:201px;height:1px;background:#e3e3e3"></div>
<div class="t" style="left:639px;top:527px;font-size:13px;color:#333;letter-spacing:-1.6px;word-spacing:1px">종류</div>
<div class="t" style="left:704px;top:526px;font-size:13px;color:#333">:</div>
<div class="t" style="left:714px;top:526px;font-size:13px;color:#333;letter-spacing:-1.6px;word-spacing:1px">없음</div>
<div class="a" style="left:917px;top:521px;width:46px;height:24px;border:1px solid #d9d9d9;background:#fff"></div>
<div class="t" style="left:923px;top:527px;font-size:13px;color:#333;letter-spacing:-1px">설정...</div>
<div class="t" style="left:631px;top:557px;font-size:13px;font-weight:bold;color:#333;letter-spacing:-1.6px;word-spacing:1px">현재 커서 위치 스타일</div>
<div class="a" style="left:749px;top:563px;width:214px;height:1px;background:#e3e3e3"></div>
<div class="t" style="left:639px;top:587px;font-size:13px;color:#333;letter-spacing:-1.6px;word-spacing:1px">스타일</div>
<div class="t" style="left:704px;top:586px;font-size:13px;color:#333">:</div>
<div class="t" style="left:714px;top:586px;font-size:13px;color:#333;letter-spacing:0px">ibinfo</div>
<div class="a" style="left:868px;top:581px;width:95px;height:24px;border:1px solid #e3e3e3;background:#fff"></div>
<div class="t" style="left:873px;top:587px;font-size:13px;color:#a8a8a8;letter-spacing:-1.5px;word-spacing:0.5px">글자 스타일 해제</div>
<div class="a" style="left:989px;top:102px;width:80px;height:28px;border:2px solid #1f5ff5;background:#fff"></div>
<div class="t" style="left:1009px;top:109px;font-size:13px;color:#333;letter-spacing:-1px">설정(<u>D</u>)</div>
<svg style="left:963px;top:110px" width="24" height="24"><circle cx="11.5" cy="12.2" r="10.7" fill="#ff0000"/><text x="11.5" y="18.3" text-anchor="middle" font-size="17" font-weight="bold" fill="#fff" font-family="Liberation Sans">6</text></svg>
<svg style="left:985px;top:65px" width="90" height="20"><path d="M5.5 5.5 H17.5 V15.5 H12 L10 18 L8.5 15.5 H5.5 Z M8 9 H15 M8 12 H15" fill="none" stroke="#555" stroke-width="1.1"/><path d="M75.5 6.5 L84.5 15.5 M84.5 6.5 L75.5 15.5" stroke="#555" stroke-width="1.1"/></svg>
<div class="t" style="left:1026px;top:67px;font-size:17px;color:#555">?</div>
<div class="a" style="left:1px;top:681px;width:1287px;height:1px;background:#cdcdcd"></div>
<div class="a" style="left:0;top:682px;width:1289px;height:1px;background:#fff"></div>
<div class="a" style="left:1015px;top:618px;width:2px;height:2px;background:#444"></div>
</body></html>
